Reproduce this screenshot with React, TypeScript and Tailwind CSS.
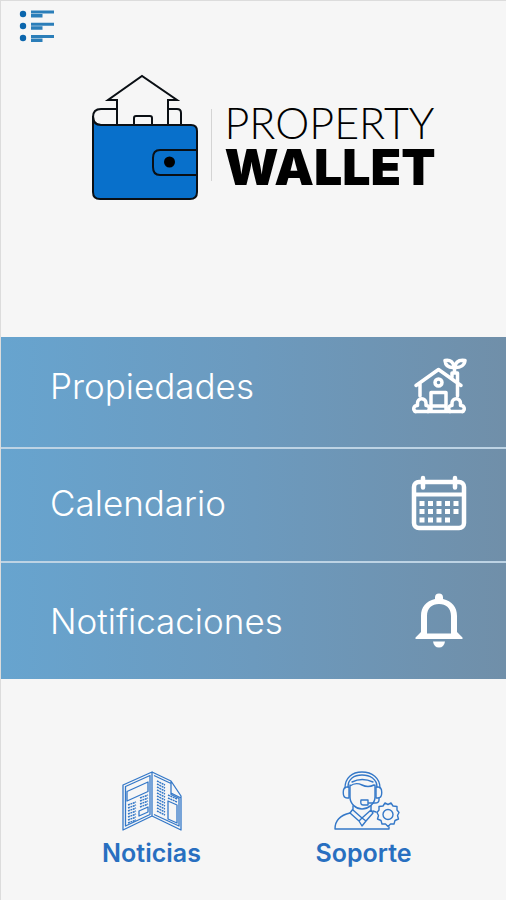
import type { ReactNode } from "react";

type MenuRowProps = {
  label: string;
  icon: ReactNode;
  className: string;
};

type ShortcutProps = {
  label: string;
  icon: ReactNode;
};

const ListIcon = () => (
  <svg viewBox="0 0 36 34" className="h-[34px] w-9">
    <g fill="#0b66ad">
      <circle cx="4" cy="5" r="3.2" />
      <circle cx="4" cy="17" r="3.2" />
      <circle cx="4" cy="29" r="3.2" />
    </g>
    <g fill="#2b7eb9">
      <path d="M12 1.5h23v3H12zM12 5h11.5v3.5H12z" />
      <path d="M12 13.7h23v3H12zM12 17.2h11.5v3.5H12z" />
      <path d="M12 26h23v3H12zM12 29.5h11.5V33H12z" />
    </g>
  </svg>
);

const WalletLogo = () => (
  <svg
    viewBox="0 0 108 128"
    className="h-32 w-27 shrink-0"
    fill="none"
    stroke="#0a0f14"
    strokeWidth="2"
  >
    <path d="M26 52V27h-9L51 3l35 24h-9v25" />
    <path d="M26 36H10q-8 0-8 8t8 8" />
    <path d="M77 36h9q4 0 4 4v12" />
    <path d="M43 52v-7q0-2 2-2h14q2 0 2 2v7" />
    <path
      d="M2 43q0 9 8 9h90q6 0 6 6v61q0 7-7 7H9q-7 0-7-7z"
      fill="#0870cb"
    />
    <path d="M106 77H69q-7 0-7 8v9q0 8 7 8h37" />
    <circle cx="78.500" cy="89" r="5.500" fill="#000" stroke="none" />
  </svg>
);

const HouseIcon = () => (
  <svg
    viewBox="0 0 55 56"
    className="size-14"
    fill="none"
    stroke="white"
    strokeWidth="3.500"
    strokeLinecap="round"
    strokeLinejoin="round"
  >
    <path d="M4.500 27.500 27 11.500l22.500 16M8.500 26v12M46 26v12" />
    <circle cx="27" cy="24.500" r="3.500" />
    <path d="M19.500 52V34.500h15V52M19.500 48h15M3.500 53.500h48" />
    <path d="M4 53.500c-3-2-2-6 2-6v-2.500a4 4 0 0 1 8.500 0v2.500c4 0 4 4 2 6" />
    <path d="M51 53.500c3-2 2-6-2-6v-2.500a4 4 0 0 0-8.500 0v2.500c-4 0-4 4-2 6" />
    <path d="M40.500 19v-4H46v9M43 15V9" />
    <path d="M43 9.500C37 10 34 7 33.500 2.500 39 1.500 42 4 43 9.500z" />
    <path d="M43 9.500C49 10 53 7 53.500 2.500 47 1.500 44 4 43 9.500z" />
  </svg>
);

const CalendarIcon = () => (
  <svg viewBox="0 0 56 56" className="size-14" fill="none" stroke="white">
    <rect x="3" y="7" width="50" height="46" rx="5" strokeWidth="4.500" />
    <path d="M3 19.500h50" strokeWidth="4" />
    <path d="M12 3v9.500M44 3v9.500" strokeWidth="4.500" strokeLinecap="round" />
    <path
      d="M8.500 28.500h39M8.500 36.500h39M8.500 45h31"
      strokeWidth="5"
      strokeDasharray="5 3.500"
    />
  </svg>
);

const BellIcon = () => (
  <svg viewBox="0 0 56 56" className="size-14">
    <path
      fill="white"
      fillRule="evenodd"
      d="M24 6V4.500a4 4 0 0 1 8 0V6c9 2 14 8 14 17v16l5.500 5.500v1.500H4.500v-1.500l5.500-5.500V23c0-9 5-15 14-17zM16 40.500h24V23c0-8-5-12-12-12s-12 4-12 12z"
    />
    <path d="M22 48.500h12q-1 6-6 6t-6-6z" fill="white" />
  </svg>
);

const NewspaperIcon = () => (
  <svg
    viewBox="0 0 60 60"
    className="size-15"
    fill="none"
    stroke="#3478c8"
    strokeWidth="1.300"
    strokeLinejoin="round"
  >
    <path d="M1 14 30 1v44L1 59zM3.500 15.500 28 4.500v39L3.500 55z" />
    <path d="M30 1l19 9 10 15v34L30 45M32 4.500l17 8v11l8 4V55L32 43.500M49 10v12l10 5" />
    <path d="M5 20.500l21-9.500v9.500L5 30zM17 45l9-4v-5l-9 4z" />
    <path d="M46 30l9 4v18l-9-4z" />
    <g strokeWidth="1.500" strokeDasharray="2 0.600">
      <path d="M6 34l8-3M6 37l8-3M6 40l8-3M6 43l8-3M6 46l8-3M6 49l8-3M6 52l8-3" />
      <path d="M18 27l8-3M18 30l8-3M18 33l8-3M18 36l8-3" />
      <path d="M35 10l8 4M35 13l8 4M35 16l8 4M35 19l8 4M35 22l8 4M35 25l8 4M35 28l8 4M35 31l8 4M35 34l8 4M35 37l8 4M35 40l8 4" />
      <path d="M46 24l9 4M46 27l9 4" />
    </g>
  </svg>
);

const SupportIcon = () => (
  <svg
    viewBox="-6 0 72 60"
    className="h-15 w-18"
    fill="none"
    stroke="#3478c8"
    strokeWidth="1.400"
    strokeLinecap="round"
    strokeLinejoin="round"
  >
    <path d="M11 17C11 7 18 1 28 1s18 6 18 16M14 16C14 8 20 4 28 4s15 4 15 12" />
    <path d="M15 16h-2c-5 0-5 11 0 11h2zM42 16h2c5 0 5 11 0 11h-2z" />
    <path d="M16 14v12c0 7 6 12 12 12s13-5 13-12V14M16 15c4-3 8-3 12-1s8 2 12 0M18 11q10-5 21 0" />
    <path d="M45 27v2q0 3-4 3h-6M27 29h7v5h-5q-3 0-2-5z" />
    <path d="M19 35v4l9 8 9-8v-4M19 38l-3 4 9 8 3-3 4 3 7-8-2-3M25 50l3 5 4-5" />
    <path d="M16 42C7 44 1 48 1 58h54v-2M39 40l3 1" />
    <path d="M51 32l3 1.500 3-1.500 2 3 4 .5v3.500l2 2.500-1.500 3 1 3.500-3.500 1.500-1 3.500h-3.500L54 55.500 51.500 53H48l-1-3.500-3.500-1.500 1-3.500-1.500-3 2-2.500V35.500l4-.5z" />
    <circle cx="54" cy="43.500" r="5" />
  </svg>
);

const MenuRow = ({ label, icon, className }: MenuRowProps) => (
  <button
    type="button"
    className={`flex w-full items-center justify-between bg-linear-to-r from-[#67a4cf] via-[#6c9abe] to-[#708fa9] pr-[39px] pl-[49px] text-left font-[Inter,sans-serif] text-[35px] leading-10 font-light text-white ${className}`}
  >
    <span>{label}</span>
    {icon}
  </button>
);

const Shortcut = ({ label, icon }: ShortcutProps) => (
  <button
    type="button"
    className="flex w-32 flex-col items-center gap-2 font-[Inter,sans-serif] text-[25px] leading-7 font-semibold text-[#286fc0]"
  >
    {icon}
    <span>{label}</span>
  </button>
);

const App = () => {
  return (
    <div className="min-h-screen border-t border-l border-[#dcdcdc] bg-[#f6f6f6]">
      <header className="pb-34">
        <button type="button" aria-label="Menú" className="mt-2 ml-[18px] block">
          <ListIcon />
        </button>
        <div className="mt-[30px] flex items-center justify-center gap-3 pl-5">
          <WalletLogo />
          <div className="flex items-center gap-3 pt-4">
            <div className="h-18 w-px bg-[#d4d4d4]" />
            <h1 className="text-black">
              <span className="block font-[Lato,sans-serif] text-[43px] leading-11 font-light">
                PROPERTY
              </span>
              <span className="block font-[Inter,sans-serif] text-[50px] leading-11 font-black">
                WALLET
              </span>
            </h1>
          </div>
        </div>
      </header>
      <nav className="flex flex-col gap-0.5 bg-[#bdd3e4]">
        <MenuRow
          label="Propiedades"
          icon={<HouseIcon />}
          className="h-[110px] pb-3"
        />
        <MenuRow
          label="Calendario"
          icon={<CalendarIcon />}
          className="h-28 pb-1"
        />
        <MenuRow
          label="Notificaciones"
          icon={<BellIcon />}
          className="h-[116px]"
        />
      </nav>
      <footer className="flex justify-center gap-21 pt-[92px] pb-4 pl-2">
        <Shortcut label="Noticias" icon={<NewspaperIcon />} />
        <Shortcut label="Soporte" icon={<SupportIcon />} />
      </footer>
    </div>
  );
};

export default App;
